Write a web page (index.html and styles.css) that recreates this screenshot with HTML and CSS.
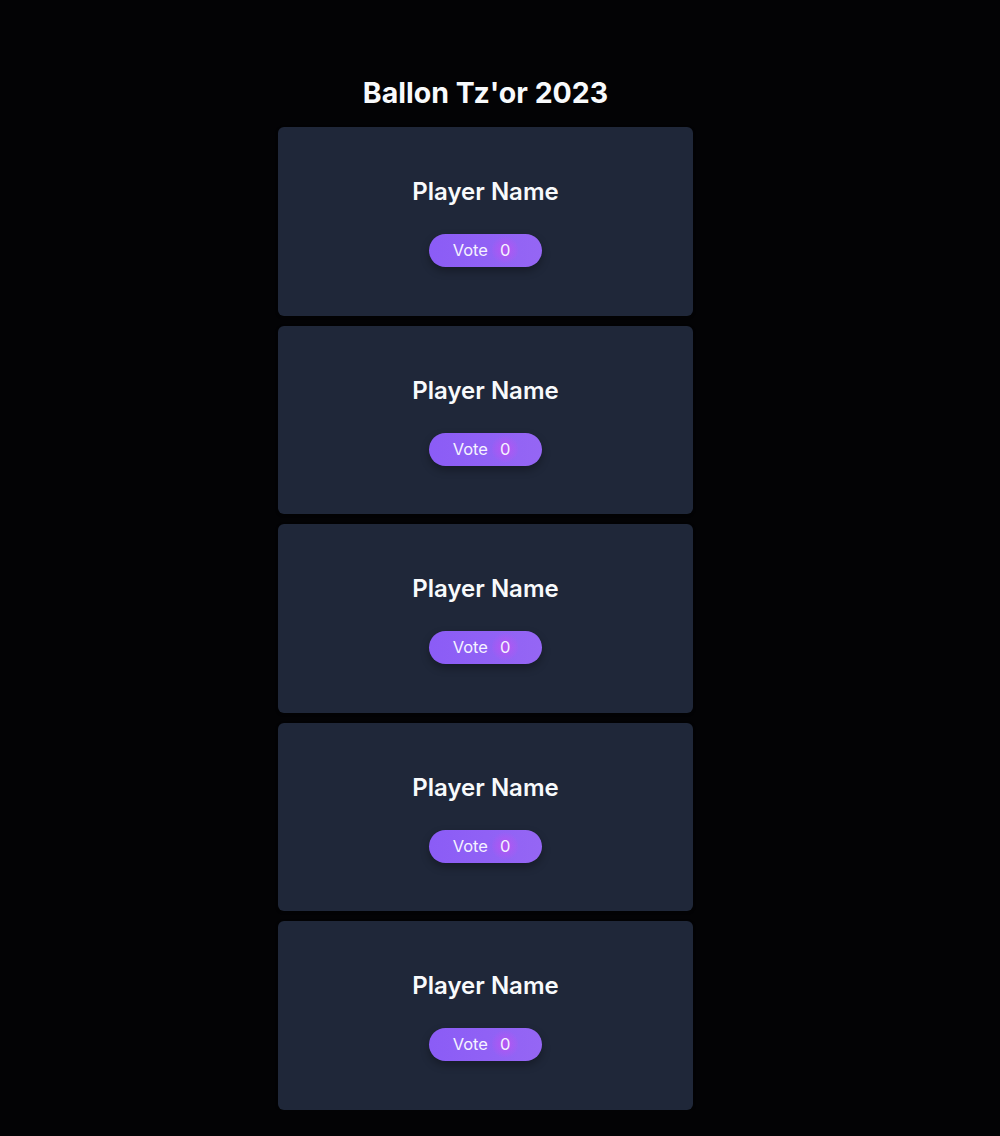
FILE: index.html
```html
<!DOCTYPE html>
<html lang="en">
<head>
    <meta charset="UTF-8">
    <meta name="viewport" content="width=device-width, initial-scale=1.0">
    <title>Ballon Tz'or 2023</title>
    <link rel="stylesheet" href="styles.css">
</head>
<body>
    <div class="page">
        <h1 class="title">Ballon Tz'or 2023</h1>

        <div class="player-list">
            <div class="player-card">
                <h2 class="player-name">Player Name</h2>
                <button class="vote-btn">Vote <span class="vote-count">0</span></button>
            </div>

            <div class="player-card">
                <h2 class="player-name">Player Name</h2>
                <button class="vote-btn">Vote <span class="vote-count">0</span></button>
            </div>

            <div class="player-card">
                <h2 class="player-name">Player Name</h2>
                <button class="vote-btn">Vote <span class="vote-count">0</span></button>
            </div>

            <div class="player-card">
                <h2 class="player-name">Player Name</h2>
                <button class="vote-btn">Vote <span class="vote-count">0</span></button>
            </div>

            <div class="player-card">
                <h2 class="player-name">Player Name</h2>
                <button class="vote-btn">Vote <span class="vote-count">0</span></button>
            </div>
        </div>
    </div>
</body>
</html>
```

FILE: styles.css
```css
body {
    font-family: Inter, "Noto Sans", sans-serif;
    margin: 0;
    padding: 0;
    background-color: #030305;
    color: #f8fafc;
}

.page {
    display: flex;
    flex-direction: column;
    align-items: center;
    padding: 75px 29px 0 0;
}

.title {
    font-size: 28.5px;
    line-height: 36px;
    font-weight: 700;
    margin: 0 0 16px 0;
}

.player-list {
    display: flex;
    flex-direction: column;
    gap: 10px;
    width: 415px;
}

.player-card {
    background-color: #1f2739;
    border-radius: 6px;
    padding: 49px 0 48.5px;
    display: flex;
    flex-direction: column;
    align-items: center;
    box-shadow: 0 1px 3px rgba(0, 0, 0, 0.4);
}

.player-name {
    font-size: 24px;
    line-height: 32px;
    font-weight: 600;
    margin: 0 0 26px 0;
}

.vote-btn {
    height: 33px;
    padding: 0 24px 1px;
    border: none;
    border-radius: 999px;
    background: linear-gradient(to right, #8b5cf6, #9566f4);
    color: #f5f3ff;
    font-family: Inter, "Noto Sans", sans-serif;
    font-size: 16.5px;
    cursor: pointer;
    box-shadow: 0 4px 8px rgba(0, 0, 0, 0.3);
    display: flex;
    align-items: center;
}

.vote-count {
    margin-left: 4px;
    padding: 4px 8px;
    border-radius: 999px;
    background: radial-gradient(circle, rgba(217, 70, 239, 0.5) 0%, rgba(217, 70, 239, 0.18) 50%, rgba(217, 70, 239, 0) 75%);
}
```
